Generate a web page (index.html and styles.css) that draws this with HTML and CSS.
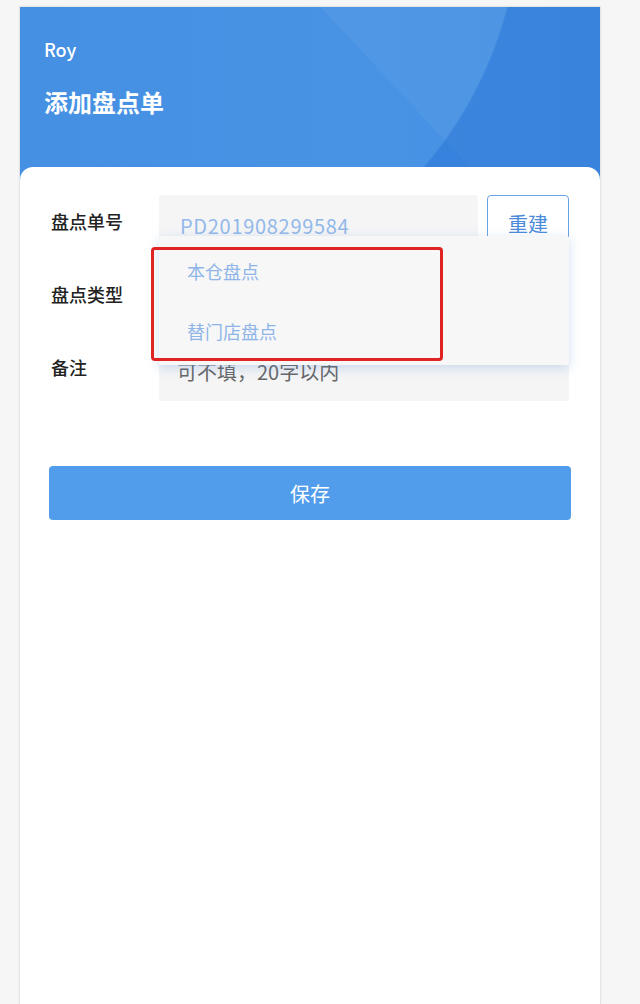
FILE: index.html
```html
<!DOCTYPE html>
<html lang="zh-CN">
<head>
<meta charset="utf-8">
<title>添加盘点单</title>
<link rel="stylesheet" href="styles.css">
</head>
<body>
<div class="frame">
  <header class="header">
    <div class="user">Roy</div>
    <h1 class="title">添加盘点单</h1>
  </header>
  <main class="card">
    <div class="form">
      <div class="row">
        <div class="label">盘点单号</div>
        <div class="field">
          <div class="input code">PD201908299584</div>
          <button class="rebuild">重建</button>
        </div>
      </div>
      <div class="row">
        <div class="label">盘点类型</div>
        <div class="field select-wrap">
          <div class="input select"></div>
          <div class="dropdown">
            <div class="option">本仓盘点</div>
            <div class="option">替门店盘点</div>
          </div>
          <div class="annotation"></div>
        </div>
      </div>
      <div class="row">
        <div class="label">备注</div>
        <div class="field">
          <div class="input note">可不填，20字以内</div>
        </div>
      </div>
    </div>
    <button class="save">保存</button>
  </main>
</div>
</body>
</html>
```
FILE: styles.css
```css
* { box-sizing: border-box; }
html, body { margin: 0; padding: 0; }
body {
  background: #f6f6f6;
  font-family: "Noto Sans CJK SC", "Noto Sans", sans-serif;
  height: 1004px;
  overflow: hidden;
}
.frame {
  margin: 7px 0 0 20px;
  width: 580px;
  min-height: 997px;
  background: #fff;
  box-shadow: 0 0 0 1px #e4e4e4, 0 0 3px rgba(0,0,0,0.08);
}
.header {
  height: 175px;
  padding: 29px 0 0 24px;
  color: #fff;
  background:
    radial-gradient(circle 400px at 100px -100px, rgba(0,0,0,0) 399px, rgba(30,105,210,0.4) 401px),
    linear-gradient(47deg, rgba(255,255,255,0) 62.3%, rgba(255,255,255,0.045) 62.5%),
    linear-gradient(90deg, #4590e2 0%, #4893e4 60%, #4590e3 100%);
}
.user {
  font-size: 18px;
  line-height: 26px;
  font-weight: 500;
}
.title {
  margin: 24px 0 0;
  font-size: 24px;
  line-height: 32px;
  font-weight: 700;
}
.card {
  margin-top: -15px;
  background: #fff;
  border-radius: 13px 13px 0 0;
  padding: 28px 29px 0;
  position: relative;
}
.form {
  display: flex;
  flex-direction: column;
  gap: 13px;
  padding-right: 2px;
}
.row {
  display: flex;
  align-items: flex-start;
}
.label {
  width: 110px;
  flex: none;
  padding: 13px 0 0 2px;
  font-size: 18px;
  line-height: 26px;
  font-weight: 500;
  color: #222;
}
.field {
  flex: 1;
  display: flex;
  gap: 9px;
}
.input {
  flex: 1;
  height: 60px;
  background: #f5f5f6;
  border-radius: 3px;
  font-size: 20px;
  line-height: 26px;
  padding-top: 18px;
}
.code {
  color: #93b9ea;
  padding-left: 21px;
  letter-spacing: 0.7px;
}
.note {
  color: #666;
  padding-left: 18px;
}
.rebuild {
  flex: none;
  width: 82px;
  height: 60px;
  background: #fff;
  border: 1.5px solid #6aa3e4;
  border-radius: 4px;
  color: #4a8ad9;
  font-family: inherit;
  font-size: 20px;
  padding: 0 0 4px;
}
.select-wrap { position: relative; }
.dropdown {
  position: absolute;
  left: 0;
  right: 0;
  top: -32px;
  height: 129px;
  padding: 5px 0 4px;
  background: #f7f7f7;
  box-shadow: 0 3px 12px rgba(90,140,210,0.28);
  border-radius: 2px;
  z-index: 2;
}
.option {
  height: 60px;
  line-height: 60px;
  padding-left: 28px;
  font-size: 18px;
  color: #8fb5e8;
}
.annotation {
  position: absolute;
  left: -8px;
  top: -21px;
  width: 292px;
  height: 114px;
  border: 3px solid #e02323;
  border-radius: 4px;
  z-index: 3;
}
.save {
  display: block;
  width: 100%;
  height: 54px;
  margin-top: 65px;
  background: #519deb;
  border: none;
  border-radius: 4px;
  color: #fff;
  font-family: inherit;
  font-size: 20px;
}
```
